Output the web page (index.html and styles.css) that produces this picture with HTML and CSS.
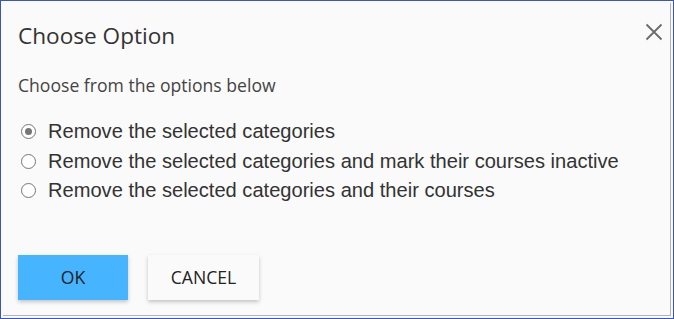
FILE: index.html
```html
<!DOCTYPE html>
<html lang="en">
<head>
<meta charset="utf-8">
<title>Choose Option</title>
<link rel="stylesheet" href="styles.css">
</head>
<body>
<div class="frame">
  <div class="dialog">
    <div class="header">
      <h2 class="title">Choose Option</h2>
      <button class="close" aria-label="Close">
        <svg width="18" height="18" viewBox="0 0 18 18"><path d="M1.5 1.5 L16.5 16.5 M16.5 1.5 L1.5 16.5" stroke="#6b6b6b" stroke-width="1.8" fill="none"/></svg>
      </button>
    </div>
    <p class="subtitle">Choose from the options below</p>
    <div class="options">
      <label class="option"><span class="radio checked"></span><span>Remove the selected categories</span></label>
      <label class="option"><span class="radio"></span><span>Remove the selected categories and mark their courses inactive</span></label>
      <label class="option"><span class="radio"></span><span>Remove the selected categories and their courses</span></label>
    </div>
    <div class="actions">
      <button class="btn btn-primary">OK</button>
      <button class="btn btn-default">CANCEL</button>
    </div>
  </div>
</div>
</body>
</html>
```

FILE: styles.css
```css
html, body {
  margin: 0;
  padding: 0;
  background: #fafafa;
}

.frame {
  width: 674px;
  height: 319px;
  box-sizing: border-box;
  border: 1px solid #3b54c4;
  padding: 1px;
  background: #fafafa;
}

.dialog {
  width: 668px;
  height: 313px;
  box-sizing: border-box;
  background: #fafafa;
  box-shadow: 1px 1px 0 0 #b4b4b4;
  padding: 0 0 0 16px;
  display: flex;
  flex-direction: column;
  font-family: "Open Sans", "Noto Sans", sans-serif;
}

.header {
  display: flex;
  align-items: flex-start;
  justify-content: space-between;
  padding-top: 19px;
}

.title {
  margin: 0;
  font-size: 22.6px;
  font-weight: 400;
  line-height: 30px;
  color: #333;
}

.close {
  border: 0;
  background: transparent;
  padding: 0;
  margin: 2px 7px 0 0;
  width: 18px;
  height: 18px;
  display: flex;
}

.subtitle {
  margin: 22px 0 0;
  font-size: 17.6px;
  line-height: 24px;
  color: #444;
}

.options {
  margin-top: 20px;
  display: flex;
  flex-direction: column;
  font-family: "Liberation Sans", Arial, sans-serif;
  font-size: 20.1px;
  color: #333;
}

.option {
  display: flex;
  align-items: center;
  height: 29.5px;
}

.radio {
  box-sizing: border-box;
  width: 15px;
  height: 15px;
  border: 1.4px solid #767676;
  border-radius: 50%;
  margin: 0 12px 0 3px;
  display: flex;
  align-items: center;
  justify-content: center;
  flex: none;
  background: #fff;
}

.radio.checked::after {
  content: "";
  width: 7px;
  height: 7px;
  border-radius: 50%;
  background: #767676;
}

.actions {
  margin-top: 49px;
  display: flex;
  gap: 20px;
}

.btn {
  height: 45px;
  border: 0;
  border-radius: 0;
  font-family: "Open Sans", "Noto Sans", sans-serif;
  font-size: 17.6px;
  color: #222;
  box-shadow: 0 2px 4px rgba(0, 0, 0, 0.22);
  padding: 0;
}

.btn-primary {
  width: 110px;
  background: #46b4fe;
}

.btn-default {
  width: 111px;
  background: #fafafa;
}
```
